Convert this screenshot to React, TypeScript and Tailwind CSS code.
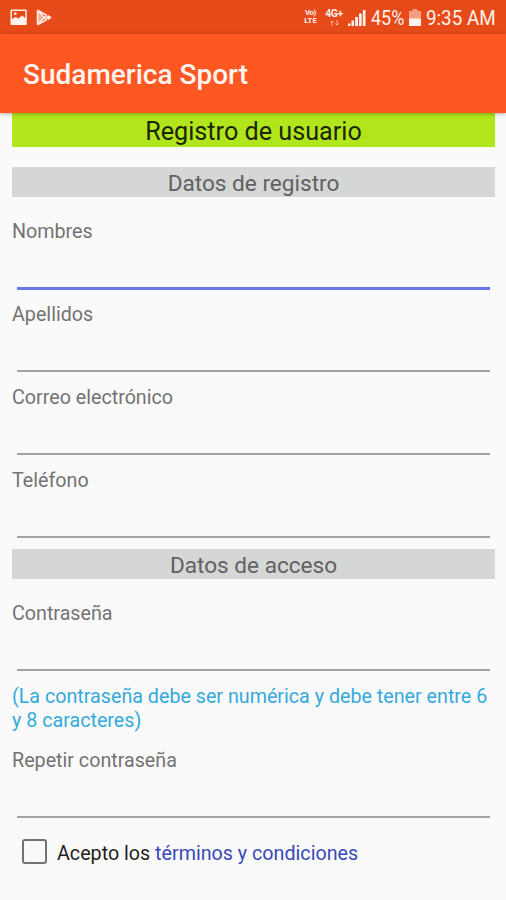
import { useState } from "react";
import { clsx } from "clsx";

type FieldProps = {
  label: string;
  name: string;
  type?: string;
  active?: boolean;
  className?: string;
};

function Field({ label, name, type = "text", active, className }: FieldProps) {
  return (
    <div className={clsx("h-[71px]", className)}>
      <label
        htmlFor={name}
        className="block h-6 text-[19.7px] leading-[25px] text-[#737373]"
      >
        {label}
      </label>
      <input
        id={name}
        name={name}
        type={type}
        className={clsx(
          "mx-[5px] block w-[473px] bg-transparent px-1 text-[20px] outline-none",
          active
            ? "h-[47px] border-b-[3px] border-[#6478e6]"
            : "h-[46px] border-b-2 border-[#a3a3a3]",
        )}
      />
    </div>
  );
}

function SectionTitle({ children }: { children: string }) {
  return (
    <h3 className="h-[30px] bg-[#d5d7d6] text-center text-[22.6px] leading-[33px] text-[#616161]">
      {children}
    </h3>
  );
}

function StatusBar() {
  return (
    <div className="flex h-[34px] items-center bg-[#e64a19] text-[#fff1ec]">
      <svg className="ml-[10px] h-[17px] w-[18px]" viewBox="0 0 18 17">
        <path
          fill="currentColor"
          fillRule="evenodd"
          d="M1.500 .500h14.300q1 0 1 1v13.500q0 1-1 1H1.500q-1 0-1-1V1.500q0-1 1-1ZM2 2v8l3.500-2 3 1.500L12 6.500l3.300 2.500V2ZM4 3.500h2.500v2.200H4Z"
        />
      </svg>
      <svg className="ml-[8px] h-[17px] w-[17px]" viewBox="0 0 17 17">
        <path
          fill="currentColor"
          fillOpacity=".6"
          d="M1 1.500l7.500 7-7.500 7Z"
        />
        <path
          fill="none"
          stroke="currentColor"
          strokeWidth="1.500"
          strokeLinejoin="round"
          d="M1.500 1.500v14M1.500 1.200l9.500 5.300M1.500 15.800l9.500-5.300M3 3l7.500 7.500M3 14l7.500-7.500"
        />
        <path fill="currentColor" d="M12.500 6l3.200 2.500-3.200 2.500-2.500-2.500Z" />
      </svg>

      <div className="ml-auto flex items-center">
        <div className="flex w-[15px] flex-col items-center text-[7.8px] leading-[8px] font-bold">
          <span className="tracking-tighter">Vo)</span>
          <span>LTE</span>
        </div>
        <div className="ml-[6px] flex w-[20px] flex-col items-center font-bold">
          <span className="text-[10.5px] leading-[9px] tracking-tighter">
            4G+
          </span>
          <svg className="mt-[2px] h-[6px] w-[9px]" viewBox="0 0 9 6">
            <path
              fill="none"
              stroke="currentColor"
              strokeOpacity=".6"
              d="M2 6V1M.5 2.500L2 1l1.500 1.500M7 0v5M5.500 3.500L7 5l1.500-1.500"
            />
          </svg>
        </div>
        <svg className="ml-[4px] h-[17px] w-[18px]" viewBox="0 0 18 17">
          <path
            fill="currentColor"
            d="M0 14.500h2.500V17H0ZM3.500 11.500H6V17H3.500ZM7.200 8H10v9H7.200ZM11 4.500h2.700V17H11ZM14.800 1h2.700v16h-2.700Z"
          />
        </svg>
        <span className="ml-[5px] w-[35px]">
          <span className="inline-block origin-left scale-x-[0.9] pt-px text-[20px] leading-[34px]">
            45%
          </span>
        </span>
        <svg className="ml-[3px] h-[17px] w-[12px]" viewBox="0 0 12 17">
          <path
            fill="currentColor"
            fillOpacity=".5"
            d="M3.500 0h5v2H12v8H0V2h3.500Z"
          />
          <path fill="currentColor" d="M0 9.500h12V17H0Z" />
        </svg>
        <span className="ml-[5px] w-[80px] whitespace-nowrap">
          <span className="inline-block origin-left scale-x-[0.94] pt-px text-[20px] leading-[34px]">
            9:35 AM
          </span>
        </span>
      </div>
    </div>
  );
}

export default function App() {
  const [accepted, setAccepted] = useState(false);

  return (
    <div className="h-[900px] w-[506px] overflow-hidden bg-[#fafafa] font-['Roboto',sans-serif]">
      <StatusBar />
      <header className="relative flex h-[79px] items-center bg-[#ff5722] pl-[23px] shadow-[0_1px_4px_rgba(0,0,0,0.3)]">
        <h1 className="pt-[3px] text-[28px] font-medium text-[#fff3ef]">
          Sudamerica Sport
        </h1>
      </header>

      <form className="pr-[11px] pl-[12px]">
        <h2 className="h-[34px] bg-[#b2e61c] text-center text-[25.2px] leading-[37px] text-[#1c2408]">
          Registro de usuario
        </h2>

        <div className="mt-5">
          <SectionTitle>Datos de registro</SectionTitle>
        </div>
        <Field className="mt-[22px]" label="Nombres" name="nombres" active />
        <Field className="mt-3" label="Apellidos" name="apellidos" />
        <Field
          className="mt-3"
          label="Correo electrónico"
          name="correo"
          type="email"
        />
        <Field className="mt-3" label="Teléfono" name="telefono" type="tel" />

        <div className="mt-[10px]">
          <SectionTitle>Datos de acceso</SectionTitle>
        </div>
        <Field
          className="mt-[22px]"
          label="Contraseña"
          name="password"
          type="password"
        />
        <p className="mt-[13px] text-[19.7px] leading-[23.500px] text-[#35a9dc]">
          (La contraseña debe ser numérica y debe tener entre 6 y 8 caracteres)
        </p>
        <Field
          className="mt-4"
          label="Repetir contraseña"
          name="repeatPassword"
          type="password"
        />

        <div className="mt-[19px] ml-[10px] flex items-center">
          <input
            id="terms"
            type="checkbox"
            checked={accepted}
            onChange={(e) => setAccepted(e.target.checked)}
            className="mb-[2px] h-[25px] w-[25px] appearance-none rounded-[3px] border-[2.500px] border-[#737373] checked:bg-[#3f51b5]"
          />
          <label
            htmlFor="terms"
            className="ml-[10px] pt-[3px] text-[19.7px] leading-[25px] text-[#1f1f1f]"
          >
            Acepto los{" "}
            <a href="#terminos" className="text-[#3949b8]">
              términos y condiciones
            </a>
          </label>
        </div>
      </form>
    </div>
  );
}
